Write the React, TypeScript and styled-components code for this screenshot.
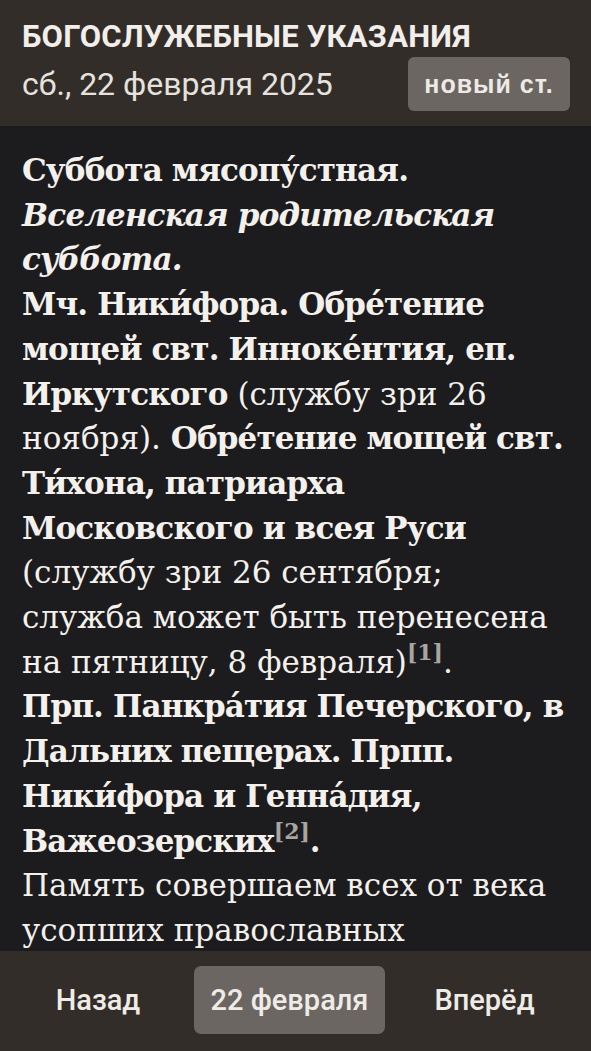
import React from "react";
import styled, { createGlobalStyle } from "styled-components";

const Global = createGlobalStyle`
  html, body { margin: 0; padding: 0; background: #1c1c1f; }
  #root { height: 100vh; }
`;

const Page = styled.div`
  height: 100vh;
  display: flex;
  flex-direction: column;
  background: #1c1c1f;
  overflow: hidden;
`;

const Header = styled.header`
  flex: none;
  background: #332d2a;
  padding: 19px 22px 0 22px;
  box-sizing: border-box;
  height: 126px;
  display: flex;
  flex-direction: column;
  gap: 2px;
`;

const Title = styled.h1`
  margin: 0;
  font-family: Roboto, "Liberation Sans", sans-serif;
  font-weight: 700;
  font-size: 31px;
  line-height: 36px;
  color: #f2eeea;
  letter-spacing: 0.2px;
`;

const DateRow = styled.div`
  display: flex;
  align-items: center;
  justify-content: space-between;
`;

const DateText = styled.span`
  font-family: Roboto, "Liberation Sans", sans-serif;
  font-weight: 400;
  font-size: 32px;
  color: #e6e2de;
`;

const StyleButton = styled.button`
  border: none;
  background: #6b6662;
  color: #eeeae6;
  border-radius: 6px;
  width: 162px;
  height: 54px;
  padding: 0;
  font-family: "Liberation Sans", Arial, sans-serif;
  font-weight: 700;
  font-size: 25px;
  letter-spacing: 1px;
  margin-right: -1px;
`;

const Content = styled.main`
  flex: 1;
  overflow: hidden;
  padding: 22px 22px 0 22px;
  font-family: "DejaVu Serif", "Liberation Serif", serif;
  font-size: 31px;
  line-height: 44.7px;
  color: #f4f0ec;
`;

const B = styled.b`
  font-weight: 700;
  letter-spacing: -0.85px;
`;

const I = styled.i`
  font-style: italic;
  font-weight: 700;
  letter-spacing: -0.85px;
`;

const NoWrap = styled.span`
  white-space: nowrap;
`;

const Note = styled.sup`
  font-size: 22px;
  line-height: 0;
  color: #a9a5a1;
  font-weight: 700;
  letter-spacing: 0;
  vertical-align: 0.6em;
`;

const Footer = styled.footer`
  flex: none;
  height: 100px;
  background: #332d2a;
  display: grid;
  grid-template-columns: 192px 191px 1fr;
  align-items: center;
  padding: 0 7px 0 2px;
  box-sizing: border-box;
`;

const NavButton = styled.button<{ $active?: boolean }>`
  border: none;
  height: 68px;
  padding: 0;
  border-radius: 7px;
  background: ${(p) => (p.$active ? "#6b6662" : "transparent")};
  color: #efebe7;
  font-family: Roboto, "Liberation Sans", sans-serif;
  font-weight: 500;
  font-size: 29px;
  margin-top: -2px;
`;

export default function App() {
  return (
    <>
      <Global />
      <Page>
        <Header>
          <Title>БОГОСЛУЖЕБНЫЕ УКАЗАНИЯ</Title>
          <DateRow>
            <DateText>сб., 22 февраля 2025</DateText>
            <StyleButton>новый ст.</StyleButton>
          </DateRow>
        </Header>
        <Content>
          <B>Суббота мясопу́стная.</B>
          <br />
          <I>Вселенская родительская суббота.</I>
          <br />
          <B>Мч. Ники́фора. Обре́тение мощей свт. Инноке́нтия, еп. Иркутского</B>{" "}
          (службу зри 26 ноября). <B>Обре́тение мощей свт. Ти́хона, патриарха Московского и всея Руси</B>{" "}
          (службу зри 26 сентября; служба может быть перенесена на пятницу, 8{" "}
          <NoWrap>
            февраля)<Note>[1]</Note>.
          </NoWrap>
          <br />
          <B>
            Прп. Панкра́тия Печерского, в Дальних пещерах. Прпп. Ники́фора и Генна́дия,{" "}
            <NoWrap>
              Важеозерских<Note>[2]</Note>.
            </NoWrap>
          </B>
          <br />
          Память совершаем всех от века усопших православных христиан, отцов и братий наших.
        </Content>
        <Footer>
          <NavButton>Назад</NavButton>
          <NavButton $active>22 февраля</NavButton>
          <NavButton>Вперёд</NavButton>
        </Footer>
      </Page>
    </>
  );
}
